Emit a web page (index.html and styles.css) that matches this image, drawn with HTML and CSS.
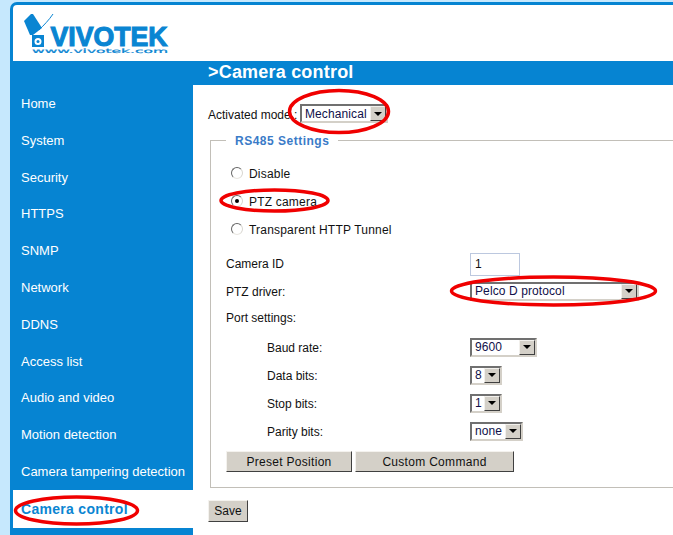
FILE: index.html
```html
<!DOCTYPE html>
<html lang="en">
<head>
<meta charset="utf-8">
<title>Camera control</title>
<link rel="stylesheet" href="styles.css">
</head>
<body>
<div class="frame">
  <header class="header">
    <svg class="logo" width="146" height="42" viewBox="0 0 146 42" aria-label="VIVOTEK">
      <path class="logo-fill" d="M0 8 L7 1 L9 1 L18 15 L9 22 L6 22 Z"/>
      <path class="logo-line" d="M15 17 C20 12 25 7 29 1"/>
      <path class="logo-fill" fill-rule="evenodd" d="M8 22 H20 V34 H8 Z M14 25 A3.5 3.5 0 1 0 14 32 A3.5 3.5 0 1 0 14 25 Z"/>
      <circle class="logo-fill" cx="14" cy="28.5" r="1.5"/>
      <text class="logo-name" x="26.5" y="32.5" textLength="117" lengthAdjust="spacingAndGlyphs">VIVOTEK</text>
      <text class="logo-url" x="8" y="40" textLength="136" lengthAdjust="spacingAndGlyphs">www.vivotek.com</text>
    </svg>
  </header>
  <div class="main">
    <nav class="sidebar">
      <a class="nav-item">Home</a>
      <a class="nav-item">System</a>
      <a class="nav-item">Security</a>
      <a class="nav-item">HTTPS</a>
      <a class="nav-item">SNMP</a>
      <a class="nav-item">Network</a>
      <a class="nav-item">DDNS</a>
      <a class="nav-item">Access list</a>
      <a class="nav-item">Audio and video</a>
      <a class="nav-item">Motion detection</a>
      <a class="nav-item">Camera tampering detection</a>
      <a class="nav-item nav-item-active">Camera control</a>
    </nav>
    <main class="content">
      <h1 class="title">&gt;Camera control</h1>
      <div class="panel">
        <div class="mode-row">
          <span class="mode-label">Activated mode :</span>
          <div class="select select-mode"><span class="select-value">Mechanical</span><span class="select-arrow"><i class="tri"></i></span></div>
        </div>
        <fieldset class="settings">
          <legend class="settings-legend">RS485 Settings</legend>
          <label class="row radio-row"><input class="radio" type="radio" name="m"><span>Disable</span></label>
          <label class="row radio-row"><input class="radio" type="radio" name="m" checked><span>PTZ camera</span></label>
          <label class="row radio-row"><input class="radio" type="radio" name="m"><span>Transparent HTTP Tunnel</span></label>
          <div class="row row-first">
            <span class="field-label">Camera ID</span>
            <input class="text-input" type="text" value="1">
          </div>
          <div class="row">
            <span class="field-label">PTZ driver:</span>
            <div class="select select-driver"><span class="select-value">Pelco D protocol</span><span class="select-arrow"><i class="tri"></i></span></div>
          </div>
          <div class="row row-port"><span class="field-label">Port settings:</span></div>
          <div class="row">
            <span class="field-label field-sub">Baud rate:</span>
            <div class="select select-baud"><span class="select-value">9600</span><span class="select-arrow"><i class="tri"></i></span></div>
          </div>
          <div class="row">
            <span class="field-label field-sub">Data bits:</span>
            <div class="select select-bits"><span class="select-value">8</span><span class="select-arrow"><i class="tri"></i></span></div>
          </div>
          <div class="row">
            <span class="field-label field-sub">Stop bits:</span>
            <div class="select select-bits"><span class="select-value">1</span><span class="select-arrow"><i class="tri"></i></span></div>
          </div>
          <div class="row">
            <span class="field-label field-sub">Parity bits:</span>
            <div class="select select-parity"><span class="select-value">none</span><span class="select-arrow"><i class="tri"></i></span></div>
          </div>
          <div class="button-row">
            <button class="btn btn-preset" type="button">Preset Position</button>
            <button class="btn btn-custom" type="button">Custom Command</button>
          </div>
        </fieldset>
        <button class="btn btn-save" type="button">Save</button>
      </div>
    </main>
  </div>
</div>
<svg class="marks" width="673" height="535" viewBox="0 0 673 535" aria-hidden="true">
  <ellipse cx="339" cy="111.5" rx="49.5" ry="21"/>
  <ellipse cx="274.5" cy="200.5" rx="53.5" ry="10.5"/>
  <ellipse cx="553.5" cy="291" rx="102" ry="14"/>
  <ellipse cx="76.5" cy="510.5" rx="61" ry="13.5"/>
</svg>
</body>
</html>
```
FILE: styles.css
```css
html, body {
  margin: 0;
  padding: 0;
  height: 535px;
  overflow: hidden;
}
body {
  position: relative;
  background: #c6e8fd;
  font-family: "Liberation Sans", Arial, sans-serif;
  font-size: 12px;
  color: #111;
}
.frame {
  margin: 2px 0 0 10px;
  height: 533px;
  padding: 3px 0 0 3px;
  box-sizing: border-box;
  background: #0684d2;
  border-top-left-radius: 7px;
  display: flex;
  flex-direction: column;
  overflow: hidden;
}
.header {
  height: 56px;
  flex: none;
  background: #fff;
  border-top-left-radius: 4px;
  padding: 8px 0 0 11px;
  box-sizing: border-box;
}
.logo { display: block; }
.logo-fill { fill: #0a85d2; }
.logo-line { fill: none; stroke: #0a85d2; stroke-width: 1; }
.logo-name {
  font-family: "Liberation Sans", Arial, sans-serif;
  font-weight: 700;
  font-size: 27px;
  fill: #0a85d2;
  stroke: #0a85d2;
  stroke-width: 1.1;
}
.logo-url {
  font-family: "DejaVu Sans", sans-serif;
  font-size: 6px;
  fill: #0a85d2;
  stroke: #0a85d2;
  stroke-width: 0.2;
}
.main {
  flex: 1;
  display: flex;
  min-height: 0;
}
.sidebar {
  width: 180px;
  flex: none;
  padding-top: 25px;
  box-sizing: border-box;
  display: flex;
  flex-direction: column;
}
.nav-item {
  height: 36.8px;
  line-height: 36.8px;
  padding-left: 8px;
  color: #fff;
  font-size: 13px;
  white-space: nowrap;
}
.nav-item-active {
  height: 38px;
  line-height: 38px;
  margin-top: -0.6px;
  background: #fff;
  color: #0a85d2;
  font-size: 14px;
  letter-spacing: 0.3px;
  font-weight: 700;
}
.content {
  flex: 1;
  min-width: 0;
  display: flex;
  flex-direction: column;
}
.title {
  margin: 0;
  height: 24px;
  line-height: 22px;
  padding-left: 15px;
  color: #fff;
  font-size: 18px;
  font-weight: 700;
  letter-spacing: 0.2px;
  flex: none;
}
.panel {
  flex: 1;
  background: #fff;
  padding: 19px 0 0 15px;
}
.mode-row {
  display: flex;
  align-items: center;
  height: 19px;
}
.mode-label {
  width: 92px;
  flex: none;
  padding-top: 2px;
  white-space: nowrap;
}
.settings {
  margin: 9px 0 0 2px;
  padding: 12px 0 15px 15px;
  width: 520px;
  border: 1px solid #c2bfb8;
  box-sizing: border-box;
  min-width: 520px;
}
.settings-legend {
  margin-left: 0;
  padding: 2px 9px 0;
  color: #3a7bc8;
  font-weight: 700;
  font-size: 12px;
  letter-spacing: 0.5px;
}
.row {
  display: flex;
  align-items: center;
  height: 28px;
}
.row-first { margin-top: 6px; }
.row-port { height: 24px; margin-bottom: 4px; }
.radio-row { padding-left: 5px; letter-spacing: 0.2px; }
.radio {
  appearance: none;
  -webkit-appearance: none;
  width: 12px;
  height: 12px;
  margin: -2px 6px 0 0;
  flex: none;
  border-radius: 50%;
  border: 1.5px solid;
  border-color: #666 #d8d6d0 #e8e6e0 #666;
  background: #fff;
  box-sizing: border-box;
  display: grid;
  place-items: center;
}
.radio:checked::before {
  content: "";
  width: 4px;
  height: 4px;
  border-radius: 50%;
  background: #000;
}
.field-label {
  width: 244px;
  flex: none;
  white-space: nowrap;
}
.field-sub {
  padding-left: 41px;
  box-sizing: border-box;
}
.text-input {
  width: 50px;
  height: 23px;
  box-sizing: border-box;
  border: 1.5px solid #bcc8df;
  padding: 0 0 0 4px;
  margin: 0;
  font: inherit;
  color: #111;
  outline: none;
}
.select {
  display: flex;
  align-items: center;
  justify-content: space-between;
  height: 19px;
  box-sizing: border-box;
  border: 2px solid;
  border-color: #707070 #d4d0c8 #d4d0c8 #707070;
  background: #fff;
  color: #10104a;
  flex: none;
}
.row .select { margin-top: -2px; }
.select-value {
  padding: 1px 0 0 3px;
  letter-spacing: 0.1px;
  white-space: nowrap;
}
.row .select-value { padding-top: 0; }
.select-arrow {
  width: 16px;
  height: 15px;
  flex: none;
  box-sizing: border-box;
  background: #d4d0c8;
  border: 1px solid;
  border-color: #f2f0ec #404040 #404040 #f2f0ec;
  display: flex;
  align-items: center;
  justify-content: center;
}
.tri {
  width: 0;
  height: 0;
  border-style: solid;
  border-width: 4px 4px 0;
  border-color: #000 transparent transparent;
}
.select-mode { width: 88px; }
.select-driver { width: 169px; }
.select-baud { width: 67px; }
.select-bits { width: 32px; }
.select-parity { width: 53px; }
.button-row {
  display: flex;
  gap: 3px;
  margin-top: 5px;
}
.btn {
  height: 21px;
  margin: 0;
  padding: 0;
  box-sizing: border-box;
  background: #d4d0c8;
  border: 1px solid;
  border-color: #f4f2ee #404040 #404040 #f4f2ee;
  font: inherit;
  letter-spacing: 0.3px;
  color: #111;
}
.btn-preset { width: 126px; }
.btn-custom { width: 159px; }
.btn-save {
  display: block;
  width: 40px;
  height: 22px;
  margin-top: 12px;
  letter-spacing: 0;
}
.marks {
  position: absolute;
  top: 0;
  left: 0;
  pointer-events: none;
}
.marks ellipse {
  fill: none;
  stroke: #f00000;
  stroke-width: 3.5;
}
```
